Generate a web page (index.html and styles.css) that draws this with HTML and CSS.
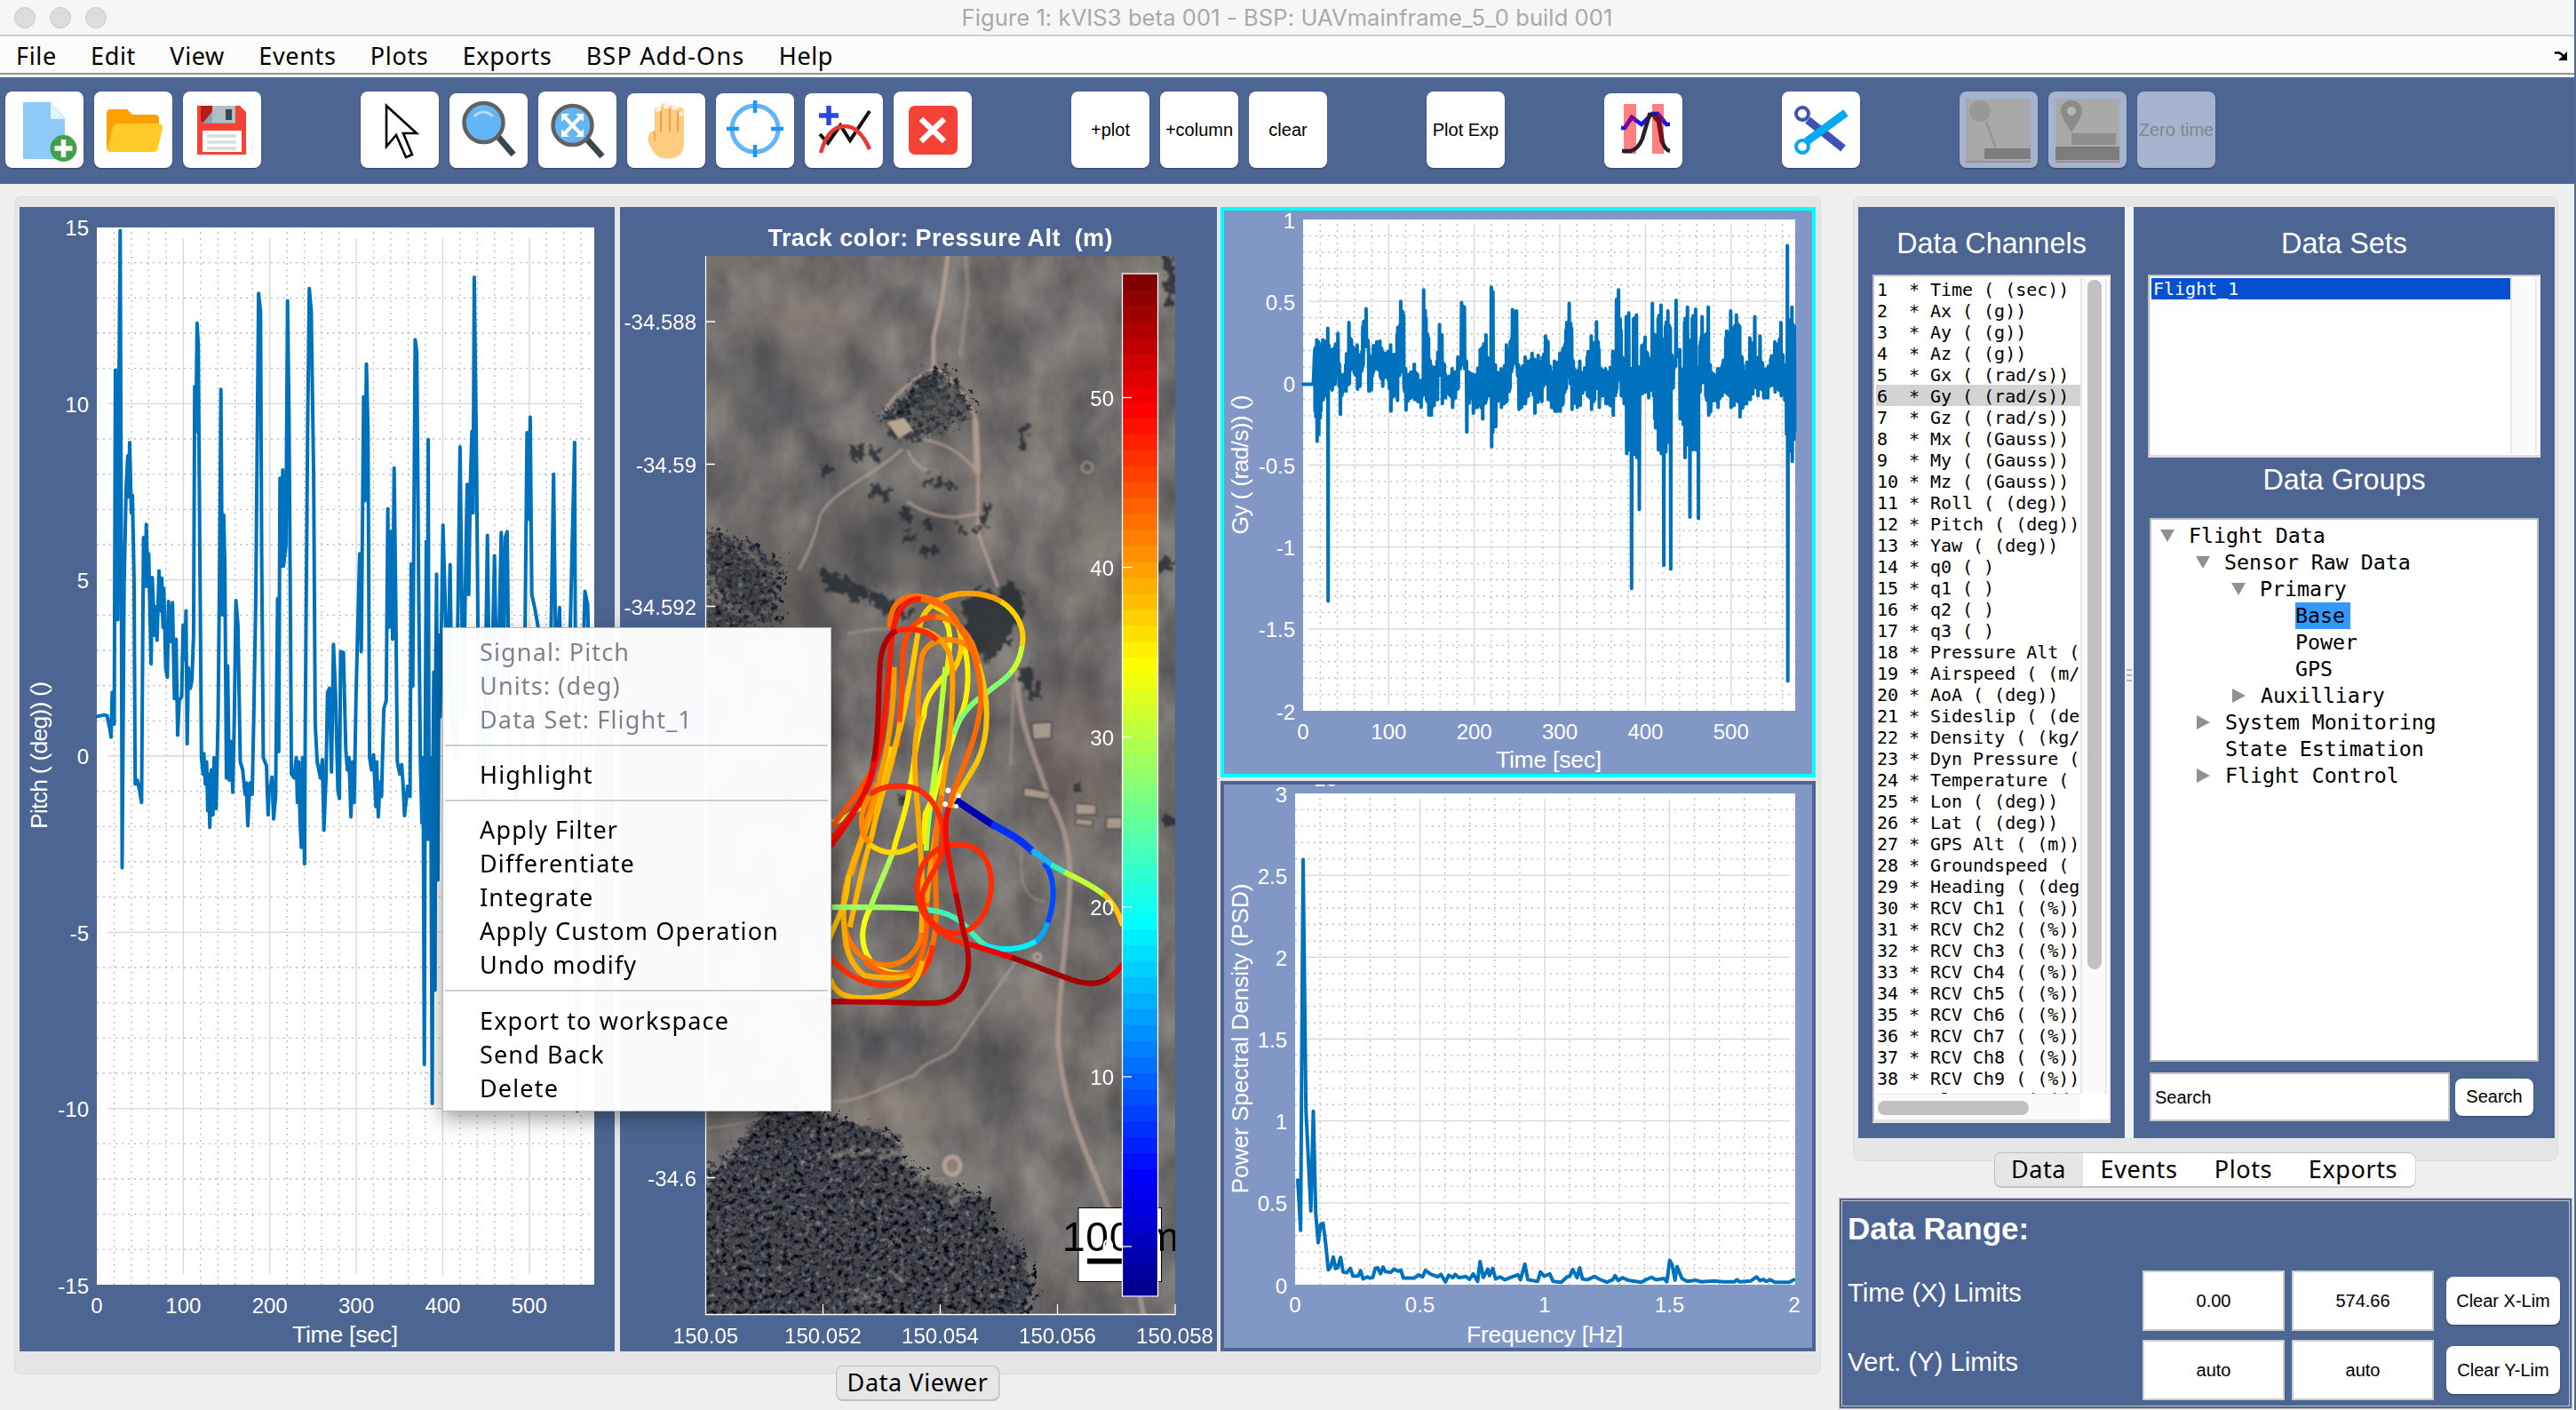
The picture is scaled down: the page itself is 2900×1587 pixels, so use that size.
FILE: index.html
```html
<!DOCTYPE html>
<html lang="en">
<head>
<meta charset="utf-8">
<title>Figure 1: kVIS3 beta 001</title>
<link rel="stylesheet" href="styles.css">
</head>
<body>
<header class="titlebar">
  <div class="lights"><i></i><i></i><i></i></div>
  <span class="window-title">Figure 1: kVIS3 beta 001 - BSP: UAVmainframe_5_0 build 001</span>
</header>
<nav class="menubar">
  <span>File</span><span>Edit</span><span>View</span><span>Events</span><span>Plots</span><span>Exports</span><span class="spaced">BSP Add-Ons</span><span>Help</span>
  <svg class="dock" viewBox="0 0 14 11"><path d="M0 2.500h2c3-1 5 0 8 4" fill="none" stroke="#000" stroke-width="2.500"/><path d="M14 1v10H4z" fill="#000"/></svg>
</nav>
<div class="toolbar">
  <button class="tool"><svg viewBox="0 0 88 86"><path d="M20 12h31l16 18v46H20z" fill="#90caf9"/><path d="M51 12l16 19H51z" fill="#e1f5fe"/><circle cx="65.500" cy="64" r="15" fill="#43a047"/><path d="M65.500 54v20M55.500 64h20" stroke="#fff" stroke-width="5.500"/></svg></button>
  <button class="tool"><svg viewBox="0 0 88 86"><path d="M14 25q0-5 5-5h18l6 6h25q5 0 5 5v20L17 67q-3-1-3-5z" fill="#ffa000"/><path d="M27 36h46q4 0 4 5l-5 22q-1 5-5 5H18q-4 0-3-4l6-23q1-5 6-5z" fill="#ffca28"/></svg></button>
  <button class="tool"><svg viewBox="0 0 88 86"><path d="M16 16h48l7 7v48H16z" fill="#f44336"/><path d="M20 16v16q0 4 4 4h35V16z" fill="#90a4ae"/><path d="M20 16v16q0 3 3 3l11-14v-5z" fill="#b71c1c"/><path d="M33 16h26v19H33z" fill="#b0bec5"/><path d="M48 20h7v12h-7z" fill="#37474f"/><path d="M22 44h44v24H22z" fill="#fff"/><path d="M27 50h33M27 57h33M27 64h33" stroke="#d6dde1" stroke-width="3.500"/></svg></button>
  <button class="tool gap-2"><svg viewBox="0 0 88 86"><path d="M29 16v46l11-13 11 25 7-3-10-24h15z" fill="#fff" stroke="#000" stroke-width="2.600"/></svg></button>
  <button class="tool low"><svg viewBox="0 0 88 84"><path d="M54 48l18 21" stroke="#37474f" stroke-width="7"/><circle cx="38.500" cy="33" r="22" fill="#64b5f6" stroke="#616161" stroke-width="4.500"/><path d="M28 26q10-10 21 0" fill="none" stroke="#bbdefb" stroke-width="3"/></svg></button>
  <button class="tool"><svg viewBox="0 0 88 86"><path d="M54 53l18 20" stroke="#37474f" stroke-width="7"/><circle cx="38.500" cy="38" r="22" fill="#64b5f6" stroke="#616161" stroke-width="4.500"/><path d="M29 28l19 20M48 28L29 48" stroke="#fff" stroke-width="4"/><path d="M26 25h9l-9 9zM51 25h-9l9 9zM26 51h9l-9-9zM51 51h-9l9-9z" fill="#fff"/></svg></button>
  <button class="tool low"><svg viewBox="0 0 88 84"><path d="M31 40V19q0-4 4-4 3 0 3 4v-4q0-4 5-4 4 0 5 4 1-2 4-2 4 0 4 5 1-3 5-2 3 1 3 5v35q0 12-9 16-10 3-18 0-7-3-9-9-6-8-4-15 1-5 7-6z" fill="#ffcc80"/><path d="M38 19v25M48 17v27M57 20v24" stroke="#e0a050" stroke-width="1.800"/><path d="M31 42v12" stroke="#eeb060" stroke-width="2"/><g fill="#ffefe0"><circle cx="35" cy="18" r="3"/><circle cx="44" cy="14" r="3.500"/><circle cx="53" cy="16" r="3"/><circle cx="61" cy="23" r="2.500"/></g></svg></button>
  <button class="tool low"><svg viewBox="0 0 88 84"><circle cx="44" cy="40" r="26" fill="none" stroke="#64b5f6" stroke-width="5"/><path d="M44 8v14M44 58v14M12 40h14M62 40h14" stroke="#2196f3" stroke-width="4.500"/></svg></button>
  <button class="tool low"><svg viewBox="0 0 88 84"><path d="M17 46l9 10 14-20 11 17 22-33" fill="none" stroke="#111" stroke-width="4"/><path d="M18 67c5-18 14-30 27-30 12 0 21 10 28 26" fill="none" stroke="#e8392f" stroke-width="4.500"/><path d="M27 14v22M16 25h22" stroke="#2848e0" stroke-width="5.500"/></svg></button>
  <button class="tool"><svg viewBox="0 0 88 86"><rect x="17" y="16" width="55" height="55" rx="7" fill="#f44336"/><path d="M31 31l26 25M57 31L31 56" stroke="#fff" stroke-width="6.500"/></svg></button>
  <button class="tool gap-2 label">+plot</button>
  <button class="tool label">+column</button>
  <button class="tool label">clear</button>
  <button class="tool gap-1 label">Plot Exp</button>
  <button class="tool gap-1 low"><svg viewBox="0 0 88 84"><path d="M22 12h14v56H22zM54 12h13v56H54z" fill="#ff8080"/><path d="M19 39h4l8-12 11 8 12-12h6l10 12h4" fill="none" stroke="#1410ff" stroke-width="4.500"/><path d="M23 39l8-12 5 4M60 23l7 8" fill="none" stroke="#7a0a90" stroke-width="4.500"/><path d="M20 65h10q8-2 13-14l8-27 5 0 6 8 4 24q3 8 8 9" fill="none" stroke="#231f2b" stroke-width="4.500"/><path d="M56 26l5 6 4 24" fill="none" stroke="#801018" stroke-width="4.500"/></svg></button>
  <button class="tool gap-1"><svg viewBox="0 0 88 86"><path d="M29 32L69 64" stroke="#3f51b5" stroke-width="9"/><circle cx="23" cy="25" r="7" fill="#fff" stroke="#3f51b5" stroke-width="4"/><path d="M72 24L28 56" stroke="#03a9f4" stroke-width="9"/><circle cx="23" cy="62" r="7" fill="#fff" stroke="#03a9f4" stroke-width="4"/></svg></button>
  <button class="tool gap-1 off"><svg viewBox="0 0 88 86"><path d="M7 8h73v72H7z" fill="#a9a9a9"/><path d="M7 79h73" stroke="#9a938a" stroke-width="2"/><path d="M30 34l11 30" stroke="#989898" stroke-width="3"/><circle cx="23" cy="22" r="12" fill="#989898"/><path d="M28 64h52v12H28z" fill="#7e7e7e"/></svg></button>
  <button class="tool off"><svg viewBox="0 0 88 86"><path d="M8 8h72v72H8z" fill="#a9a9a9"/><path d="M8 79h72" stroke="#9a938a" stroke-width="2"/><path d="M26 46Q14 28 14 22a12 12 0 0 1 24 0q0 6-12 24z" fill="#8b8b8b"/><circle cx="26" cy="22" r="5" fill="#b5b5b5"/><path d="M26 47h50v13H26z" fill="#8f8f8f"/><path d="M8 62h72v15H8z" fill="#7c7c7c"/></svg></button>
  <button class="tool off label">Zero time</button>
</div>

<main class="work">
  <section class="viewer">
    <div class="tabpane plots">
      <svg class="plot dark" id="pitch" viewBox="22 233 670 1288"></svg>
      <svg class="plot dark" id="map" viewBox="698 233 672 1288">
        <defs>
          <clipPath id="mapclip"><rect x="795" y="288" width="528" height="1191"/></clipPath>
          <filter id="ground" x="0" y="0" width="100%" height="100%" color-interpolation-filters="sRGB">
            <feTurbulence type="fractalNoise" baseFrequency="0.02 0.014" numOctaves="6" seed="8"/>
            <feColorMatrix values="0.3 0 0 0 0.295  0.29 0 0 0 0.287  0.24 0.04 0 0 0.285  0 0 0 0 1"/>
          </filter>
          <filter id="rough" x="-10%" y="-10%" width="120%" height="120%" color-interpolation-filters="sRGB">
            <feTurbulence type="fractalNoise" baseFrequency="0.12" numOctaves="3" seed="4" result="n"/>
            <feDisplacementMap in="SourceGraphic" in2="n" scale="24" xChannelSelector="R" yChannelSelector="G"/>
            <feGaussianBlur stdDeviation="0.8"/>
          </filter>
          <filter id="bush" x="-10%" y="-10%" width="120%" height="120%" color-interpolation-filters="sRGB">
            <feTurbulence type="fractalNoise" baseFrequency="0.16" numOctaves="4" seed="11" result="n"/>
            <feDisplacementMap in="SourceGraphic" in2="n" scale="40" xChannelSelector="R" yChannelSelector="G" result="d"/>
            <feColorMatrix in="n" values="0.8 0 0 0 -0.19  0.8 0 0 0 -0.18  0.75 0 0 0 -0.12  0 6 0 0 -2.2" result="c"/>
            <feComposite in="c" in2="d" operator="in"/>
          </filter>
          <filter id="soft"><feGaussianBlur stdDeviation="16"/></filter>
          <filter id="edge"><feGaussianBlur stdDeviation="1"/></filter>
        </defs>
        <g clip-path="url(#mapclip)">
          <rect x="795" y="288" width="528" height="1191" fill="#6d6a67"/>
          <rect x="795" y="288" width="528" height="1191" filter="url(#ground)"/>
          <g filter="url(#soft)" opacity=".3">
            <ellipse cx="910" cy="365" rx="70" ry="35" fill="#b8a294"/><ellipse cx="860" cy="430" rx="50" ry="70" fill="#404448"/>
            <ellipse cx="1010" cy="610" rx="90" ry="50" fill="#2b2e33"/><ellipse cx="1110" cy="560" rx="25" ry="70" fill="#a89589"/>
            <ellipse cx="880" cy="660" rx="60" ry="60" fill="#44423f"/><ellipse cx="1000" cy="1255" rx="80" ry="30" fill="#b0a090"/>
            <ellipse cx="1090" cy="1210" rx="70" ry="30" fill="#3c3c42"/><ellipse cx="1180" cy="1130" rx="35" ry="25" fill="#b09a8a"/>
            <ellipse cx="1210" cy="850" rx="50" ry="80" fill="#6e5a55"/><ellipse cx="1240" cy="590" rx="60" ry="40" fill="#8f8378"/>
          </g>
          <g filter="url(#edge)" fill="none" stroke="#b5a094" stroke-linecap="round">
            <path d="M1067 288L1060 340 1051 380 1051 415" stroke-width="5" opacity=".85"/><path d="M1087 288L1090 330 1081 400" stroke-width="5" opacity=".4"/>
            <path d="M1051 415C1030 425 1005 445 994 465M1053 415C1080 430 1090 450 1098 470L1101 530 1101 600 1123 660" stroke-width="4" opacity=".75"/>
            <path d="M1098 475L1100 530" stroke-width="8" opacity=".7"/>
            <path d="M1040 495Q1075 500 1097 528M1015 506C985 535 940 550 923 580 917 610 908 625 900 640M1022 508Q1030 525 1045 530M1022 565Q1060 590 1098 578" stroke-width="3.500" opacity=".65"/>
            <path d="M955 713Q985 707 1008 708" stroke-width="3" opacity=".5"/>
            <path d="M1145 755C1145 810 1165 850 1180 895 1200 930 1208 960 1203 1020 1195 1110 1188 1160 1193 1190 1200 1250 1220 1290 1240 1340L1280 1440 1287 1479" stroke-width="6" opacity=".7"/>
            <path d="M1141 770L1138 860" stroke-width="4" opacity=".4"/>
            <path d="M1145 1080L1075 1180C1060 1195 1045 1190 1030 1210 1000 1220 970 1240 938 1240" stroke-width="3.500" opacity=".55"/>
            <path d="M795 1270Q850 1264 880 1250M1150 960Q1145 1010 1175 1015" stroke-width="3" opacity=".4"/>
            <ellipse cx="1072" cy="1312" rx="9" ry="10" stroke-width="5" fill="#8c8078"/><circle cx="1168" cy="1077" r="4" stroke-width="3"/><circle cx="1224" cy="526" r="6" stroke-width="3" opacity=".6"/>
          </g>
          <g id="trees" fill="#252b30" filter="url(#rough)" opacity=".8">
            <path d="M996 468L1045 420 1056 418 1056 436 1010 475zM1000 478L1040 487 1034 494 1006 494z"/>
            <path d="M1085 680Q1100 655 1125 670 1140 640 1150 670 1160 700 1138 705 1130 745 1105 742 1085 720 1085 680z"/>
            <path d="M1144 760L1160 748 1170 785 1160 785zM922 638L980 664 965 680 930 662zM980 664L1030 690 1015 700 980 680z"/>
            <path d="M955 502L970 504 972 518 957 514zM980 504l12 2-4 12-12-2zM925 524h12v10h-12zM980 545l24 6-2 12-20-4zM1042 537h9v12h-9zM1054 535h10v12h-10zM1066 544h8v10h-8zM1012 575l10-2 8 8-14 8zM1040 585h10v9h-10zM1016 600h12v12h-12zM1076 592h8v9h-8zM1106 565h8v26h-8zM1096 596h10v7h-10zM1038 613h14v12h-14zM1148 480h8v24h-8z"/>
            <path d="M795 600L820 608 850 640 868 650 866 680 850 695 830 680 800 650zM795 680l50 15-10 18-40-8z" opacity=".7"/>
            <path d="M1310 288h13v60h-7zM1302 630h21v14h-21zM1310 920h12v10h-12zM1014 895h8v10h-8zM1210 880h6v10h-6z"/>
          </g>
          <path d="M795 595L850 615 885 640 875 680 880 705 795 715zM985 475L1045 418 1065 415 1100 460 1060 490 1030 492z" filter="url(#bush)" opacity=".8"/>
          <path d="M1030 440L1075 430 1095 465 1060 490 1030 480z" fill="#454c49" filter="url(#rough)" opacity=".4"/>
          <path d="M998 475l20-5 10 14-16 10z" fill="#b5a592" filter="url(#edge)"/>
          <g fill="#a8998c" stroke="#45413c" stroke-width="1.300" filter="url(#edge)"><path d="M1162 814l22-1-1 18-20 1zM1153 886l30 6-4 8-27-4zM1211 904l23 2v11h-23zM1212 921l18 2v7l-20-2zM1246 920h17v13h-18z"/></g>
          <path d="M795 1340L830 1300 860 1250 900 1250 940 1260 1010 1280 1015 1310 1050 1330 1110 1350 1120 1390 1150 1410 1160 1450 1150 1479 785 1490z" fill="#3c4043" filter="url(#rough)" opacity=".85"/>
          <path d="M785 1325L830 1290 855 1255 890 1245 940 1260 1005 1280 1020 1315 1055 1330 1110 1350 1120 1390 1145 1400 1165 1450 1155 1500 785 1500z" filter="url(#bush)"/>
          <g fill="none" stroke="#a49689" stroke-width="6" filter="url(#rough)" opacity=".55"><path d="M935 1300Q975 1294 1015 1300M1030 1325Q1055 1322 1075 1345L1072 1360M1000 1435h20M960 1460l25-5"/></g>
          <g class="track" transform="translate(900 620) scale(.33333 .34435)">
            <path d="M60 1473H250" stroke="#960000"/><path d="M110 888C150 880 175 860 205 838" stroke="#a0ff50"/>
            <path d="M490 225C520 260 505 340 497 400 440 460 422 490 420 540 388 620 390 700 375 760 360 870 330 920 318 980" stroke="#ffee00"/>
            <path d="M318 980C290 1050 260 1110 240 1165" stroke="#a8ff50"/><path d="M240 1165C205 1230 205 1290 240 1340 265 1375 310 1385 380 1380" stroke="#f5ff10"/>
            <path d="M493 380C480 500 470 600 460 700 440 850 430 900 428 980" stroke="#b4ff40"/>
            <path d="M545 280C580 360 575 480 540 550 500 650 480 750 425 860L418 960" stroke="#fff000"/><path d="M520 390C560 330 550 260 520 215L455 180" stroke="#ffd000"/>
            <path d="M250 860C260 800 290 700 310 640" stroke="#ffe000"/><path d="M300 700C340 620 380 400 395 300 410 200 430 190 470 160" stroke="#ffc800"/>
            <path d="M465 165C520 130 620 130 680 165" stroke="#ffa000"/><path d="M680 165C730 195 765 250 752 310" stroke="#ffd000"/><path d="M752 310C745 350 735 375 710 402" stroke="#c8ff30"/><path d="M712 400C690 425 660 440 632 465 560 510 540 550 520 600" stroke="#80ff70"/><path d="M520 600C490 690 460 760 450 830" stroke="#e0ff20"/>
            <path d="M400 560C400 480 405 380 415 340 435 290 500 280 550 300 590 320 600 350 610 400" stroke="#ff8800"/>
            <path d="M410 540C385 600 385 700 400 850 410 1000 420 1100 412 1250" stroke="#ffa800"/>
            <path d="M412 1250C400 1340 300 1385 220 1330 150 1290 130 1180 165 1070 200 960 240 860 260 760" stroke="#ff7800"/>
            <path d="M305 250C305 170 350 145 400 148 470 155 510 190 525 235" stroke="#ff7000"/>
            <path d="M330 640L345 480 350 330C360 240 410 215 460 215" stroke="#ff4800"/><path d="M460 215C540 220 590 290 605 370" stroke="#ff7c00"/>
            <path d="M605 370C640 480 645 600 600 690 560 760 525 800 520 840" stroke="#ffc400"/>
            <path d="M400 157C470 160 520 200 540 250 600 330 620 440 610 520 590 650 530 740 505 840" stroke="#ff6800"/>
            <path d="M320 380C320 520 300 640 270 750 240 900 200 960 175 1060" stroke="#ff9800"/>
            <path d="M340 560C320 700 270 800 245 930 220 1000 200 1100 170 1230" stroke="#ffb400"/>
            <path d="M405 257C470 265 517 320 517 400 520 560 500 650 485 760 470 900 440 1000 430 1150" stroke="#ffa000"/>
            <path d="M430 1150C435 1290 410 1385 330 1385 280 1385 240 1360 220 1340" stroke="#ff6400"/>
            <path d="M215 930C190 1000 150 1080 148 1170 150 1250 150 1340 220 1388 280 1400 350 1395 385 1385" stroke="#ffb000"/>
            <path d="M480 800C450 950 460 1050 462 1180 460 1310 425 1365 370 1385" stroke="#ff7000"/>
            <path d="M90 1300C120 1200 160 1180 165 1060" stroke="#ffc000"/>
            <path d="M90 1310C150 1390 220 1420 300 1420 400 1415 440 1370 450 1290" stroke="#ff3000"/>
            <path d="M105 1400C120 1445 150 1462 220 1462 330 1460 400 1430 415 1340" stroke="#ffb800"/>
            <path d="M110 900C160 840 210 780 235 730" stroke="#ff5000"/><path d="M110 940C170 870 230 800 250 720 290 600 295 450 310 300 320 190 360 155 410 157" stroke="#ff1800"/>
            <path d="M105 965C180 870 240 780 250 690" stroke="#f00800"/><path d="M250 690C270 600 265 480 272 380 275 300 310 265 330 262" stroke="#b00000"/><path d="M328 262Q365 250 405 260 440 268 465 292" stroke="#ff2800"/>
            <path d="M235 800C200 860 200 920 240 960" stroke="#ff8800"/><path d="M235 958C290 1000 350 990 395 960" stroke="#ffd400"/>
            <path d="M110 1165H240M240 1165C300 1165 350 1165 400 1170" stroke="#9cff5c"/><path d="M400 1170C570 1180 560 1250 630 1290" stroke="#44f0b0"/><path d="M625 1288C680 1310 750 1305 800 1275" stroke="#00f0ff"/><path d="M798 1276C820 1262 830 1240 838 1215" stroke="#00a8ff"/><path d="M838 1215C865 1150 865 1060 825 1020" stroke="#0048ff"/>
            <path class="thick" d="M528 815L660 900" stroke="#0000b0"/><path class="thick" d="M650 893C720 930 750 945 790 985" stroke="#0030ff"/><path d="M785 978L855 1028" stroke="#10b8ff"/><path d="M850 1026L900 1052" stroke="#30f0c0"/><path d="M895 1050C960 1080 1000 1100 1030 1125" stroke="#c0ff38"/><path d="M1025 1120Q1070 1155 1092 1225" stroke="#ffc800"/>
            <path d="M240 795C290 760 360 765 400 780 460 810 490 880 485 960 480 1030 440 1050 415 1120 410 1180 450 1240 520 1250 600 1250 640 1180 648 1100 650 1000 600 960 540 960 460 955 395 1020 398 1110 400 1200 480 1270 580 1288" stroke="#ff2c00"/>
            <path d="M575 1286L720 1330" stroke="#f00000"/><path d="M715 1328L900 1395C980 1425 1020 1415 1050 1392" stroke="#a00000"/><path d="M1045 1395Q1070 1380 1092 1350" stroke="#e80000"/>
            <path d="M505 840C480 900 500 1000 530 1130" stroke="#f80800"/><path d="M528 1120L555 1250C590 1350 570 1480 450 1478 400 1482 380 1473 110 1473" stroke="#b80000"/>
            <g fill="#fff"><circle cx="502" cy="783" r="9"/><circle cx="537" cy="800" r="8"/><circle cx="492" cy="828" r="9"/><circle cx="530" cy="835" r="7"/></g>
          </g>
          <rect x="1214" y="1359.500" width="93.500" height="83" fill="#fff" stroke="#000"/>
          <text class="scale" x="1196" y="1408" textLength="131">100 m</text>
          <path d="M1224 1419.500H1270" stroke="#000" stroke-width="6"/>
        </g>
      </svg>
      <div class="stack">
        <svg class="plot light active" id="gy" viewBox="1374 233 670 642"></svg>
        <svg class="plot light" id="psd" viewBox="1374 879 670 642"></svg>
      </div>
    </div>
    <div class="tabs"><span class="tab on solo">Data Viewer</span></div>
  </section>

  <aside class="side">
    <div class="tabpane lists">
      <section class="panel channels">
        <h2>Data Channels</h2>
        <div class="listbox">
          <div class="view">
            <pre class="rows" id="rows"></pre>
            <div class="vtrack"><i></i></div>
          </div>
          <div class="htrack"><i></i></div>
        </div>
      </section>
      <div class="grip"><i></i><i></i><i></i></div>
      <section class="panel sets">
        <h2>Data Sets</h2>
        <div class="setbox"><div class="set-row">Flight_1</div><div class="set-track"></div></div>
        <h2 class="groups-title">Data Groups</h2>
        <ul class="tree">
          <li class="open">Flight Data</li>
          <li class="open l1">Sensor Raw Data</li>
          <li class="open l2">Primary</li>
          <li class="l3"><mark>Base</mark></li>
          <li class="l3">Power</li>
          <li class="l3">GPS</li>
          <li class="shut l2">Auxilliary</li>
          <li class="shut l1">System Monitoring</li>
          <li class="l1">State Estimation</li>
          <li class="shut l1">Flight Control</li>
        </ul>
        <div class="search"><div class="field">Search</div><button class="btn">Search</button></div>
      </section>
    </div>
    <div class="tabs side-tabs"><span class="tab on t1">Data</span><span class="tab t2">Events</span><span class="tab t3">Plots</span><span class="tab t4">Exports</span></div>
    <section class="range">
      <h3>Data Range:</h3>
      <div class="limit"><label>Time (X) Limits</label><div class="num">0.00</div><div class="num">574.66</div><button class="btn wide">Clear X-Lim</button></div>
      <div class="limit"><label>Vert. (Y) Limits</label><div class="num">auto</div><div class="num">auto</div><button class="btn wide">Clear Y-Lim</button></div>
    </section>
  </aside>

  <div class="context">
    <p class="dim">Signal: Pitch</p><p class="dim">Units: (deg)</p><p class="dim">Data Set: Flight_1</p><hr>
    <p>Highlight</p><hr>
    <p>Apply Filter</p><p>Differentiate</p><p>Integrate</p><p>Apply Custom Operation</p><p>Undo modify</p><hr>
    <p>Export to workspace</p><p>Send Back</p><p>Delete</p>
  </div>
</main>
<script src="charts.js"></script>
</body>
</html>
```
FILE: styles.css
```css
* { box-sizing: border-box; margin: 0; padding: 0; }
body { width: 2900px; height: 1587px; overflow: hidden; background: #efefef; border-right: 2px solid #4c6c94; font-family: "Liberation Sans", Arial, sans-serif; color: #000; }
button { border: 0; font: inherit; }

.titlebar { height: 41px; background: #f6f6f6; border-bottom: 2px solid #cfcfcf; display: grid; grid-template-columns: 1fr auto 1fr; align-items: center; }
.lights { display: flex; gap: 16px; padding-left: 16px; }
.lights i { width: 24px; height: 24px; border-radius: 50%; background: #dcdcdc; border: 1px solid #cacaca; }
.window-title { font: 25.5px/38px Inter, sans-serif; letter-spacing: .1px; color: #a9a9a9; }

.menubar { height: 46px; display: flex; gap: 38.3px; padding-left: 18px; background: linear-gradient(#fbfbfb 41px, #938f93 41px 43px, #fff 43px); font: 27px/43px "Noto Sans", sans-serif; letter-spacing: .65px; }
.menubar .spaced { letter-spacing: 1.2px; }
.dock { width: 14px; height: 11px; margin: 16px 8px 0 auto; }

.toolbar { height: 120px; background: #4d6593; display: flex; gap: 12px; padding: 16px 6px; }
.tool { width: 88px; height: 86px; flex: none; border-radius: 8px; background: #fff; box-shadow: 0 1px 2px rgba(0,0,0,.35); white-space: nowrap; }
.tool svg { display: block; width: 100%; height: 100%; }
.tool.low { height: 84px; margin-top: 2px; }
.tool.label { font-size: 20px; display: flex; align-items: center; justify-content: center; }
.tool.gap-1, .tool.gap-2 { margin-left: 100px; }
.tool.off { background: #a6b3ce; color: #808590; }

.work { position: relative; display: flex; padding: 14px 0 0 16px; height: 1380px; }
.tabpane { background: #e6e6e6; border: 1px solid #dcdcdc; border-radius: 8px; }
.viewer { width: 2034px; }
.plots { height: 1326px; display: flex; padding: 11px 5px 25px; }
.plot { display: block; flex: none; }
.plots > .plot { height: 1288px; }
#pitch { width: 670px; }
#map { width: 672px; margin: 0 4px 0 6px; }
.plot.dark { background: #4d6593; }
.stack { display: flex; flex-direction: column; gap: 4px; }
.stack .plot { width: 670px; height: 642px; background: #8198c7; }
.plot text { font-size: 24px; fill: #fff; }
.plot .axis-title { font-size: 26.5px; }
.plot .map-title { font-size: 27px; font-weight: bold; }
.plot .scale { font-size: 46px; fill: #000; }
.track path { fill: none; stroke-width: 18; }
.track .thick { stroke-width: 24; }

.tabs { display: flex; justify-content: center; margin-top: -10px; position: relative; }
.side-tabs { padding-right: 5px; }
.tab { height: 40px; background: #fff; border: solid #c2c2c2; border-width: 1px 0 2px; font: 27px/36px "Noto Sans", sans-serif; letter-spacing: .6px; text-align: center; box-shadow: 1px 0 #d5d5d5; }
.tab.on { background: #e6e6e6; border-left-width: 1px; border-radius: 8px 0 0 8px; }
.tab.solo { width: 184px; border-right-width: 1px; border-radius: 8px; }
.t1 { width: 100px; } .t2 { width: 127px; } .t3 { width: 108px; }
.t4 { width: 139px; border-radius: 0 8px 8px 0; }

.side { width: 828px; margin-left: 20px; }
.lists { width: 794px; height: 1086px; margin-left: 16px; display: flex; padding: 11px 3px 25px 5px; }
.panel { background: #4d6593; height: 1048px; }
.channels { width: 300px; padding: 0 16px; }
.sets { width: 474px; padding: 0 16px; }
.panel h2 { height: 76px; font-weight: normal; font-size: 32.3px; line-height: 83px; color: #fff; text-align: center; white-space: nowrap; }
.grip { width: 10px; background: #f0f0f0; display: flex; flex-direction: column; justify-content: center; gap: 4px; padding: 6px 2px 0; }
.grip i { height: 2px; background: #b5b5b5; }
.listbox { height: 955px; background: #fff; border: 2px solid #bdbdbd; border-right-color: #eee; border-bottom: 4px solid #e4e4e0; padding: 2px; }
.view { display: flex; height: 918px; overflow: hidden; }
.rows { width: 230px; height: 918px; overflow: hidden; font: 20px/24px "DejaVu Sans Mono", monospace; letter-spacing: -.03px; }
.rows span { display: block; padding-left: 1px; height: 24px; line-height: 26px; }
.rows .picked { background: #d3d3d3; }
.vtrack { width: 30px; background: #fafafa; border: solid #e8e8e8; border-width: 0 2px; padding: 2px 6px; }
.vtrack i { display: block; width: 16px; height: 776px; border-radius: 8px; background: #c1c1c1; }
.htrack { width: 230px; height: 29px; background: #fafafa; border-top: 1px solid #e4e4e4; padding: 7px 2px; }
.htrack i { display: block; width: 170px; height: 16px; border-radius: 8px; background: #c1c1c1; }
.setbox { width: 442px; height: 206px; background: #fff; border: 2px solid #bdbdbd; border-right-color: #eee; border-bottom: 3px solid #ddd; padding: 2px; display: flex; justify-content: space-between; }
.set-row { width: 404px; height: 24px; background: #0750d2; color: #fff; font: 20px/24px "DejaVu Sans Mono", monospace; padding-left: 2px; }
.set-track { width: 30px; background: #fafafa; border: solid #e8e8e8; border-width: 0 2px; }
.panel .groups-title { height: 68px; line-height: 51px; }
.tree { width: 438px; height: 612px; margin-left: 2px; background: #fff; border: 2px solid #bdbdbd; list-style: none; padding: 3px 0 0 43px; font: 23.3px/30px "DejaVu Sans Mono", monospace; letter-spacing: -.05px; white-space: nowrap; }
.tree li { height: 30px; }
.tree .l1 { margin-left: 40px; } .tree .l2 { margin-left: 80px; } .tree .l3 { margin-left: 119px; }
.tree li.open::before, .tree li.shut::before { content: ""; display: inline-block; margin-left: -33px; }
.tree li.open::before { border: solid transparent; border-width: 14px 8.5px 0; border-top-color: #909090; margin-right: 16px; vertical-align: 1px; }
.tree li.shut::before { border: solid transparent; border-width: 8.5px 0 8.5px 15px; border-left-color: #909090; margin-right: 17px; margin-left: -32px; vertical-align: 0; }
.tree mark { display: inline-block; width: 62px; height: 30px; background: #39f; }
.search { display: flex; gap: 6px; align-items: center; margin: 12px 0 0 2px; }
.field { width: 338px; height: 55px; background: #fff; border: 2px solid #c8c8c8; font-size: 20px; line-height: 52px; padding-left: 4px; }
.btn { width: 88px; height: 42px; border-radius: 8px; background: #fff; font-size: 20px; text-align: center; box-shadow: 0 1px 2px rgba(0,0,0,.35); }

.range { width: 826px; height: 238px; margin-top: 11px; background: #4d6593; border: 4px double #c4c4c4; padding: 11px 10px 0 6px; color: #fff; }
.range h3 { font-size: 35px; line-height: 39px; height: 67px; }
.limit { display: flex; align-items: center; height: 68px; margin-bottom: 10px; color: #000; }
.limit label { width: 332px; height: 68px; color: #fff; font-size: 29.5px; line-height: 50px; letter-spacing: -.1px; }
.num { width: 160px; height: 68px; margin-right: 8px; background: #fff; border: 2px solid #ccc; font-size: 20px; line-height: 65px; text-align: center; }
.wide { width: 128px; height: 54px; margin-left: 6px; }

.context { position: absolute; left: 498px; top: 499px; width: 438px; height: 545px; background: rgba(255,255,255,.97); border: 1px solid #b8b8b8; box-shadow: 0 8px 22px rgba(0,0,0,.38); padding: 7px 3px 0 2px; font: 27px/38px "Noto Sans", sans-serif; letter-spacing: 1.15px; white-space: nowrap; }
.context p { height: 38px; padding-left: 39px; line-height: 40px; }
.context .dim { color: #808285; }
.context hr { border: 0; height: 2px; background: #cfcfcf; margin: 10px 0 12.2px; }
```
FILE: charts.js
```js
const NS = "http://www.w3.org/2000/svg";

function add(parent, tag, attrs, text) {
  const el = document.createElementNS(NS, tag);
  for (const k in attrs) el.setAttribute(k, attrs[k]);
  if (text !== undefined) el.textContent = text;
  parent.appendChild(el);
  return el;
}

function label(svg, x, y, text, anchor, cls, extra) {
  return add(svg, "text", Object.assign({ x, y, "text-anchor": anchor || "middle", class: cls || "" }, extra || {}), text);
}

// Axes box with dotted minor and solid major grid, tick labels and titles.
function axes(svg, a) {
  add(svg, "rect", { x: a.x0, y: a.y0, width: a.x1 - a.x0, height: a.y1 - a.y0, fill: "#fff" });
  const px = v => a.x0 + (v - a.xmin) * a.kx;
  const py = v => a.y1 - (v - a.ymin) * a.ky;
  let minor = "", major = "";
  for (let i = 1; a.xmin + i * a.xminor < a.xmax - 1e-6; i++) {
    const x = px(a.xmin + i * a.xminor).toFixed(1);
    if (i % 5) minor += `M${x} ${a.y1}V${a.y0}`;
    else major += `M${x} ${a.y0 + a.inset}V${a.y1 - a.inset}`;
  }
  for (let i = 1; a.ymin + i * a.yminor < a.ymax - 1e-6; i++) {
    const y = py(a.ymin + i * a.yminor).toFixed(1);
    if (i % 5) minor += `M${a.x0} ${y}H${a.x1}`;
    else major += `M${a.x0 + a.inset} ${y}H${a.x1 - a.inset}`;
  }
  add(svg, "path", { d: minor, stroke: "#b9b9b9", "stroke-width": 1.3, "stroke-dasharray": "2 5", fill: "none" });
  add(svg, "path", { d: major, stroke: "#d6d6d6", "stroke-width": 1.3, fill: "none" });
  a.xticks.forEach(v => label(svg, px(v), a.xlab, String(v)));
  a.yticks.forEach(v => label(svg, a.x0 - 9, py(v) + 9.5, String(v), "end"));
  label(svg, a.xt[0], a.xt[1], a.xt[2], "middle", "axis-title", { textLength: a.xt[3] });
  label(svg, 0, 0, a.yt[2], "middle", "axis-title", {
    transform: `translate(${a.yt[0]} ${a.yt[1]}) rotate(-90)`, textLength: a.yt[3]
  });
}

function line(svg, nums, ox, oy, sx, sy) {
  let d = "";
  for (let i = 0; i < nums.length; i += 2)
    d += (i ? "L" : "M") + (ox + nums[i] / sx).toFixed(1) + " " + (oy + nums[i + 1] / sy).toFixed(1);
  add(svg, "path", { d, fill: "none", stroke: "#0072bd", "stroke-width": 4, "stroke-linejoin": "round", "stroke-linecap": "round" });
}

// Pitch
const pitch = document.getElementById("pitch");
axes(pitch, { x0: 109, x1: 669, y0: 256, y1: 1446, xmin: 0, xmax: 574.66, kx: 0.9735, ymin: -15, ymax: 15, ky: 39.667,
  xminor: 20, yminor: 1, inset: 12, xticks: [0, 100, 200, 300, 400, 500], yticks: [15, 10, 5, 0, -5, -10, -15],
  xlab: 1477.5, xt: [388.5, 1511, "Time [sec]", 119], yt: [53, 850, "Pitch ( (deg)) ()", 166] });
line(pitch, [245,1299,262,1295,270,1297,277,1330,280,1350,283,1240,288,1318,291,450,294,1000,297,1062,300,500,303,108,306,900,308,1670,313,980,318,740,322,660,324,760,327,627,331,800,334,757,338,960,341,1465,346,1455,352,1480,357,1510,360,1100,362,860,366,980,369,828,373,980,375,900,381,1170,384,958,390,1100,393,1030,396,1112,401,942,405,1040,408,960,411,1080,413,985,418,1180,422,1203,425,1017,430,1115,435,1020,440,1255,444,1110,448,1345,452,1260,458,1250,462,1075,466,1160,469,1040,472,1366,475,1180,480,1230,484,1210,488,1100,491,490,494,600,497,335,500,390,504,900,508,1400,512,1440,514,1390,518,1465,521,1410,524,1530,526,1440,529,1571,533,1430,537,1540,540,1400,545,1525,550,1300,553,1010,557,497,561,1050,564,805,567,930,571,1450,574,1175,578,1455,582,1360,587,1485,591,1300,595,1015,600,1075,606,1410,612,1430,618,1490,621,1462,625,1567,630,1462,636,1490,640,1300,645,1020,652,262,657,305,660,900,664,1400,672,1420,676,1540,679,1470,682,1480,686,1448,690,1550,695,1495,700,1010,703,1385,706,715,709,930,713,695,715,930,721,880,725,280,729,575,732,1000,735,1440,742,1450,747,1400,750,1510,753,1410,757,1560,760,1620,763,1400,768,1660,770,1300,776,580,780,250,785,305,791,710,795,1320,800,1410,808,1450,813,1405,817,1578,822,1450,826,1240,831,1230,836,1435,841,1122,846,1240,852,1480,856,1500,859,1140,866,1142,872,1380,876,1430,880,1400,885,1545,889,1410,893,1510,898,1240,907,900,911,1140,917,515,920,770,924,435,928,600,932,1400,937,1430,942,1393,948,1520,950,1410,954,1545,958,1460,962,1495,968,1280,974,1260,978,790,981,1080,987,845,990,1110,994,690,998,1010,1002,1410,1008,1440,1013,1417,1016,1460,1020,1542,1028,1470,1034,1495,1037,925,1041,1225,1047,375,1051,405,1056,1000,1060,1400,1064,1560,1067,1400,1070,2152,1072,1400,1075,870,1077,1600,1080,620,1082,1600,1084,1400,1087,1600,1090,2248,1092,1400,1094,1190,1097,1970,1099,1190,1101,950,1104,1700,1107,1100,1110,1300,1117,830,1122,1000,1128,1250,1135,927,1140,1300,1150,1400,1160,638,1168,1300,1178,730,1182,1000,1186,730,1190,600,1193,800,1196,222,1202,700,1208,1400,1220,1500,1229,855,1236,1400,1247,905,1254,1300,1264,848,1270,1200,1274,860,1279,846,1285,1400,1300,1500,1315,1450,1323,1200,1329,603,1333,815,1337,565,1341,1000,1349,1035,1357,1080,1370,1400,1388,1200,1396,705,1402,1200,1411,1032,1420,1500,1438,1080,1449,627,1455,2266,1462,1500,1475,992,1482,1025,1490,1400], 0, 210, 2.24, 2.178);

// Gy: knots hold x, upper and lower bound of the oscillation.
const gy = document.getElementById("gy");
axes(gy, { x0: 1467, x1: 2021, y0: 247, y1: 800, xmin: 0, xmax: 574.66, kx: 0.9635, ymin: -2, ymax: 1, ky: 184.33,
  xminor: 20, yminor: 0.1, inset: 6, xticks: [0, 100, 200, 300, 400, 500], yticks: [1, 0.5, 0, -0.5, -1, -1.5, -2],
  xlab: 831.5, xt: [1743.5, 864, "Time [sec]", 119], yt: [1405, 523, "Gy ( (rad/s)) ()", 157] });
const env = [262,400,560,267,375,638,271,380,620,276,390,560,282,375,530,286,378,520,290,450,520,294,345,1053,298,400,500,304,400,505,311,395,490,319,358,470,324,460,568,331,475,500,338,440,508,346,330,488,352,375,440,358,400,460,366,388,503,372,430,495,380,340,440,388,294,380,394,400,508,400,420,505,406,390,455,414,380,450,422,378,470,428,405,495,436,410,470,442,405,480,448,388,560,454,430,520,464,360,532,473,275,440,480,310,500,485,450,557,492,465,525,506,438,530,514,465,535,522,480,550,529,245,510,535,320,530,541,370,570,547,440,570,554,450,545,562,430,530,568,335,440,574,362,540,582,465,525,590,470,510,599,450,550,606,470,525,613,420,500,622,278,430,629,290,450,634,430,614,642,460,510,650,465,565,660,465,550,668,400,545,673,395,580,682,362,530,689,440,520,695,238,652,699,250,600,705,440,600,712,460,510,719,450,550,726,460,540,732,388,535,740,400,500,747,296,440,757,300,440,762,440,555,768,450,550,778,420,540,785,430,520,795,410,500,801,430,565,810,415,530,818,430,535,828,365,480,834,380,530,842,460,550,850,430,560,856,440,560,863,410,560,870,400,540,878,350,500,886,280,470,892,345,555,898,450,535,905,460,550,912,430,545,920,460,500,930,420,520,940,365,555,947,390,530,953,328,490,959,400,550,968,460,510,975,450,540,985,460,545,993,405,570,1002,270,500,1007,245,470,1013,350,520,1020,440,540,1026,315,670,1032,305,660,1038,450,1020,1044,320,670,1051,310,680,1057,460,815,1064,390,515,1072,368,510,1080,420,525,1090,280,500,1095,380,580,1104,320,660,1111,285,670,1117,400,960,1122,340,665,1128,300,640,1134,345,970,1140,430,500,1148,272,420,1157,400,580,1163,460,560,1169,330,680,1176,290,640,1181,400,835,1188,320,660,1196,295,660,1202,460,838,1206,390,510,1212,315,480,1220,380,520,1227,290,570,1232,440,560,1240,465,530,1250,450,550,1260,450,520,1270,370,510,1282,300,550,1289,350,545,1296,310,530,1304,340,575,1312,440,545,1320,460,540,1329,370,530,1335,400,515,1341,315,490,1348,440,520,1354,365,500,1362,450,525,1372,450,525,1380,425,490,1390,380,510,1398,390,500,1405,330,520,1412,440,500,1418,440,620,1421,130,1260,1427,330,660,1432,290,690,1438,340,610];
const osc = [233, 490, 258, 490];
for (let i = 0; i < env.length; i += 3) {
  const [x, t, b] = env.slice(i, i + 3);
  osc.push(x - 0.5, t, x + 0.5, b);
  if (i + 3 < env.length) {
    const [nx, nt, nb] = env.slice(i + 3, i + 6);
    const hiMax = Math.max(t, nt), loMin = Math.min(b, nb);
    const hi = Math.abs(t - nt) > 120 ? hiMax : hiMax * 0.7 + Math.min(t, nt) * 0.3;
    const lo = Math.max(hi + 20, Math.abs(b - nb) > 120 ? loMin : loMin * 0.7 + Math.max(b, nb) * 0.3);
    const n = Math.max(1, Math.round((nx - x) / 2.5));
    for (let k = 1; k <= n; k++) {
      const u = x + (nx - x) * k / (n + 1), j = (k * 37 + i * 13) % 17;
      osc.push(u - 0.5, hi + j * 0.8, u + 0.5, lo - (17 - j) * 0.6);
    }
  }
}
line(gy, osc, 1360, 220, 2.178, 2.306);
add(gy, "rect", { x: 1376, y: 235, width: 666, height: 638, fill: "none", stroke: "#00ffff", "stroke-width": 4 });

// Power spectral density
const psd = document.getElementById("psd");
label(psd, 1482, 885, "× 10", "middle", "", {});
axes(psd, { x0: 1458, x1: 2021, y0: 893, y1: 1446, xmin: 0, xmax: 2, kx: 281, ymin: 0, ymax: 3, ky: 184.33,
  xminor: 0.1, yminor: 0.1, inset: 6, xticks: [0, 0.5, 1, 1.5, 2], yticks: [3, 2.5, 2, 1.5, 1, 0.5, 0],
  xlab: 1477, xt: [1739, 1511, "Frequency [Hz]", 176], yt: [1405, 1169, "Power Spectral Density (PSD)", 349] });
line(psd, [220,1010,227,1132,233,232,240,840,247,980,252,1085,258,843,264,1090,270,1162,276,1118,282,1115,288,1160,295,1228,301,1220,307,1197,313,1225,318,1222,325,1198,331,1233,340,1235,349,1224,355,1243,368,1243,374,1230,380,1250,390,1245,397,1248,404,1246,410,1224,416,1223,423,1237,429,1221,435,1232,448,1234,456,1226,466,1231,473,1229,479,1248,505,1248,516,1240,526,1245,533,1229,545,1238,563,1245,571,1239,582,1257,590,1241,600,1247,606,1239,615,1247,632,1244,641,1251,650,1238,661,1256,667,1208,675,1246,686,1226,690,1242,698,1224,705,1250,716,1245,728,1252,745,1245,760,1240,766,1252,777,1214,784,1252,808,1256,815,1233,824,1243,838,1238,846,1256,866,1258,880,1245,887,1243,894,1227,905,1247,911,1223,918,1250,930,1252,948,1244,958,1250,978,1258,992,1252,998,1242,1006,1254,1016,1247,1030,1253,1062,1258,1075,1251,1088,1246,1098,1252,1118,1249,1125,1257,1132,1205,1138,1216,1145,1253,1150,1220,1162,1249,1175,1256,1195,1253,1210,1257,1240,1255,1265,1257,1290,1257,1297,1252,1304,1257,1330,1255,1345,1245,1353,1254,1362,1251,1368,1256,1378,1252,1390,1258,1425,1258,1436,1252], 1360, 860, 2.178, 2.157);
add(psd, "rect", { x: 1376, y: 881, width: 666, height: 638, fill: "none", stroke: "#4d6593", "stroke-width": 4 });

// Map frame, ticks and colour bar (jet, 64 bands)
const map = document.getElementById("map");
label(map, 1058.5, 277, "Track color: Pressure Alt\u00a0 (m)", "middle", "map-title", { textLength: 388 });
add(map, "path", { d: "M794.5 288V1479.5H1323.5M794 362h11M794 522.5h11M794 682.5h11M794 1325.5h11M926.5 1479v-11M1058.5 1479v-11M1190.5 1479v-11M1323 1479v-11", stroke: "#fff", "stroke-width": 1.3, fill: "none" });
[["-34.588", 362], ["-34.59", 522.5], ["-34.592", 683], ["-34.6", 1326]].forEach(t => label(map, 784, t[1] + 9, t[0], "end"));
["150.05", "150.052", "150.054", "150.056", "150.058"].forEach((t, i) => label(map, 794.5 + i * 132, 1511.5, t));
const band = c => Math.round(255 * Math.max(0, Math.min(1, c)));
for (let i = 0; i < 64; i++) {
  const v = (i + 1) / 16;
  const rgb = [Math.min(v - 1.5, 4.5 - v), Math.min(v - 0.5, 3.5 - v), Math.min(v + 0.5, 2.5 - v)].map(band);
  add(map, "rect", { x: 1264, y: (1459 - (i + 1) * 17.98).toFixed(2), width: 39, height: 18.6, fill: `rgb(${rgb})` });
}
add(map, "rect", { x: 1263.5, y: 308, width: 40, height: 1151, fill: "none", stroke: "#fff", "stroke-width": 1.3 });
[50, 40, 30, 20, 10, 0].forEach((v, i) => {
  const y = 447.5 + i * 191.1;
  add(map, "path", { d: `M1264 ${y}h10`, stroke: "#fff", "stroke-width": 1.3 });
  label(map, 1254, y + 9, String(v), "end");
});

// Channel list
const names = ["Time ( (sec))", "Ax ( (g))", "Ay ( (g))", "Az ( (g))", "Gx ( (rad/s))", "Gy ( (rad/s))", "Gz ( (rad/s))",
  "Mx ( (Gauss))", "My ( (Gauss))", "Mz ( (Gauss))", "Roll ( (deg))", "Pitch ( (deg))", "Yaw ( (deg))", "q0 ( )", "q1 ( )",
  "q2 ( )", "q3 ( )", "Pressure Alt (", "Airspeed ( (m/", "AoA ( (deg))", "Sideslip ( (de", "Density ( (kg/", "Dyn Pressure (",
  "Temperature (", "Lon ( (deg))", "Lat ( (deg))", "GPS Alt ( (m))", "Groundspeed (", "Heading ( (deg", "RCV Ch1 ( (%))",
  "RCV Ch2 ( (%))", "RCV Ch3 ( (%))", "RCV Ch4 ( (%))", "RCV Ch5 ( (%))", "RCV Ch6 ( (%))", "RCV Ch7 ( (%))",
  "RCV Ch8 ( (%))", "RCV Ch9 ( (%))", "Elevator ( (de"];
names.forEach((n, i) => {
  const row = document.createElement("span");
  row.textContent = String(i + 1).padEnd(3) + "* " + n;
  if (i === 5) row.className = "picked";
  document.getElementById("rows").appendChild(row);
});
```
